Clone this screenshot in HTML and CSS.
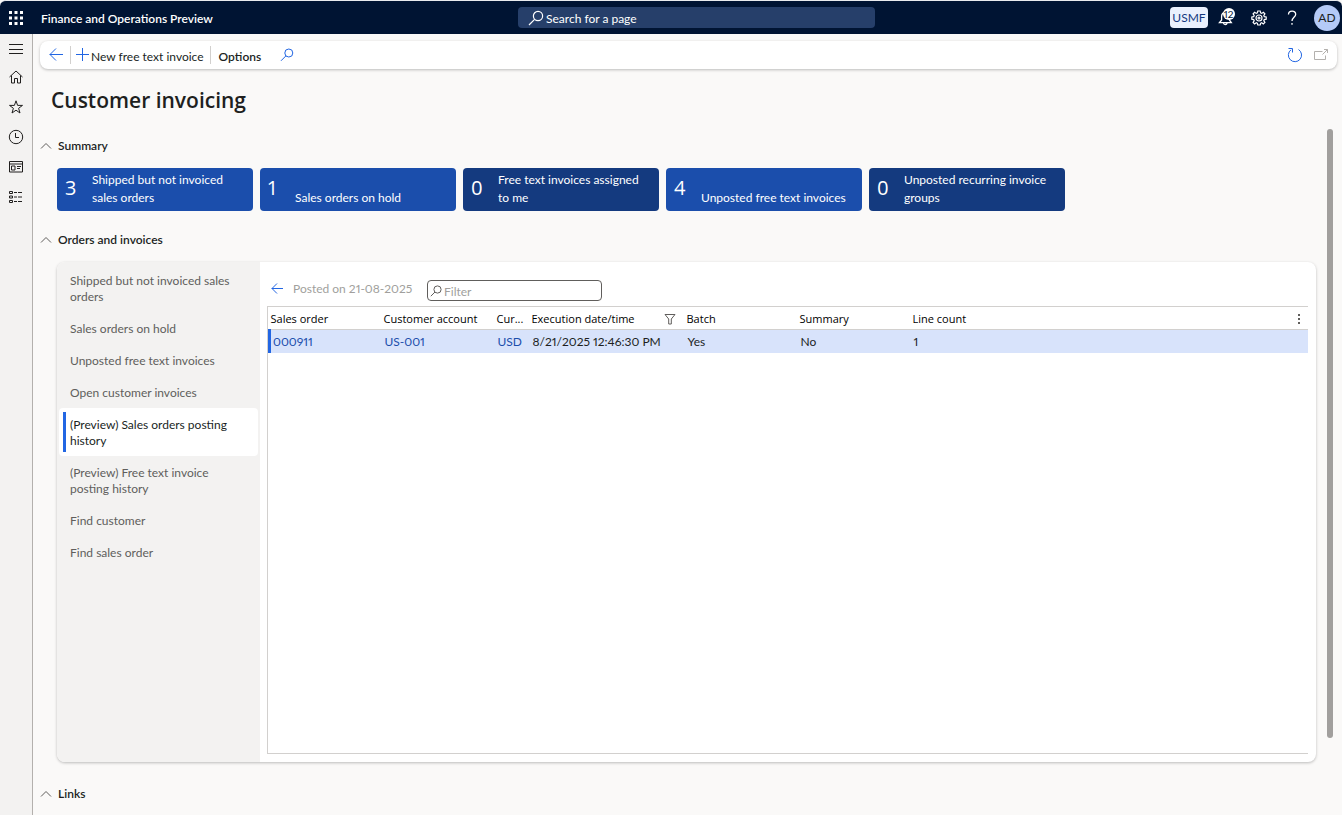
FILE: index.html
```html
<!DOCTYPE html>
<html lang="en">
<head>
<meta charset="utf-8">
<title>Customer invoicing</title>
<link rel="stylesheet" href="styles.css">
</head>
<body>
<header class="topbar">
  <button class="waffle" aria-label="App launcher">
    <svg width="14" height="14" viewBox="0 0 14 14" fill="#fff"><path d="M0 0h3v3H0zM5.500 0h3v3h-3zM11 0h3v3h-3zM0 5.500h3v3H0zM5.500 5.500h3v3h-3zM11 5.500h3v3h-3zM0 11h3v3H0zM5.500 11h3v3h-3zM11 11h3v3h-3z"/></svg>
  </button>
  <span class="product">Finance and Operations Preview</span>
  <label class="page-search">
    <svg width="16" height="16" viewBox="0 0 16 16" fill="none" stroke="#fff" stroke-width="1.200"><circle cx="10" cy="6" r="4.600"/><path d="M6.600 9.400L1 15"/></svg>
    <input type="text" placeholder="Search for a page" aria-label="Search for a page">
  </label>
  <div class="top-actions">
    <button class="company">USMF</button>
    <button class="bar-btn" aria-label="Notifications, 12 new">
      <span class="bell">
        <svg width="16" height="18" viewBox="0 0 16 18" fill="none" stroke="#fff" stroke-width="1.300"><path d="M8 3C4.800 3 3.600 5.300 3.600 7.500V11L1.500 13.600h11.800L11.400 11V9"/><path d="M5.500 14c.3 2 3.200 2 3.600 0"/></svg>
        <span class="badge">12</span>
      </span>
    </button>
    <button class="bar-btn" aria-label="Settings">
      <svg width="16" height="16" viewBox="0 0 16 16" fill="none" stroke="#fff" stroke-width="1.200"><path d="M6.800 1h2.400l.4 1.900 1.100.5 1.700-1.100 1.500 1.600-1.100 1.700.5 1.100 1.900.3v2.200l-1.900.4-.5 1.100 1.100 1.700-1.600 1.500-1.600-1.100-1.100.5L9.200 15H6.800l-.4-1.700-1.100-.5-1.700 1.100-1.500-1.500 1.100-1.700-.5-1.100L.8 9.200V7l1.900-.3.500-1.100-1.100-1.700 1.500-1.600 1.700 1.100 1.100-.5z"/><circle cx="8" cy="8" r="3"/><circle cx="8" cy="8" r="1"/></svg>
    </button>
    <button class="bar-btn" aria-label="Help">
      <svg width="12" height="16" viewBox="0 0 12 16" fill="none" stroke="#fff" stroke-width="1.300"><path d="M2.500 4.500C2.500 0 9.700 0 9.700 4.300c0 2.900-3.700 3.200-3.700 6.700"/><path d="M6 13v1.700"/></svg>
    </button>
    <button class="avatar" aria-label="Account">AD</button>
  </div>
</header>
<div class="shell">
  <nav class="rail" aria-label="Modules">
    <button aria-label="Expand"><svg width="16" height="16" viewBox="0 0 16 16"><path d="M1 4.500h14M1 9.500h14M1 13.500h14"/></svg></button>
    <button aria-label="Home"><svg width="16" height="16" viewBox="0 0 16 16"><path d="M1.500 8L8 2l6.500 6M3.500 6.500v7.500h3V9.500h3V14h3V6.500"/></svg></button>
    <button aria-label="Favorites"><svg width="16" height="16" viewBox="0 0 16 16"><path d="M8 1.800l1.600 4.600h4.900l-3.900 2.900 1.400 4.700L8 11.200 4 14l1.400-4.700-3.900-2.900h4.900z"/></svg></button>
    <button aria-label="Recent"><svg width="16" height="16" viewBox="0 0 16 16"><circle cx="8" cy="8" r="6.700"/><path d="M7.500 4v4.500H11"/></svg></button>
    <button aria-label="Workspaces"><svg width="16" height="16" viewBox="0 0 16 16"><path d="M1.500 2.500h13v10.500h-13zM1.500 5h13M3.500 7h3.500v4H3.500zM9 7.500h4M9 9.500h3"/></svg></button>
    <button aria-label="Modules"><svg width="16" height="16" viewBox="0 0 16 16"><path d="M1.500 2.500h3v2h-3zM1.500 7h3v2h-3zM1.500 11.500h3v2h-3zM6 3.500h3M10 3.500h4M6 8h3M10 8h4M6 12.500h3M10 12.500h4"/></svg></button>
  </nav>
  <main class="page">
    <div class="toolbar">
      <button class="tool back" aria-label="Back"><svg class="blue" width="14" height="14" viewBox="0 0 14 14"><path d="M14 6.500H.8M7 .5l-6 6 6 6"/></svg></button>
      <button class="tool new"><svg class="blue" width="14" height="14" viewBox="0 0 14 14"><path d="M6.500 0v13M0 6.500h13"/></svg><span>New free text invoice</span></button>
      <button class="tool options"><span>Options</span></button>
      <button class="tool" aria-label="Find action"><svg class="blue" width="14" height="14" viewBox="0 0 14 14"><circle cx="8.800" cy="5" r="4"/><path d="M5.900 7.900L1 12.800"/></svg></button>
      <div class="tool-end">
        <button class="tool" aria-label="Refresh"><svg class="blue" width="16" height="16" viewBox="0 0 16 16"><path d="M11.500 2.500A6.600 6.600 0 1 1 4 2.800M1.500 1.500h4v4"/></svg></button>
        <button class="tool" aria-label="Open in new window"><svg class="muted" width="14" height="14" viewBox="0 0 14 14"><path d="M8.500 3.500H.5v8h11V7.500M8.500 6.500l5-5M10 1.500h3.500V5"/></svg></button>
      </div>
    </div>
    <h1>Customer invoicing</h1>
    <div class="scroller">
      <div class="content">
        <section class="summary">
          <h2><button class="section-head"><svg width="12" height="8" viewBox="0 0 12 8"><path d="M1 6.500l5-5 5 5"/></svg>Summary</button></h2>
          <div class="tiles">
            <button class="tile"><b>3</b><span>Shipped but not invoiced sales orders</span></button>
            <button class="tile"><b>1</b><span>Sales orders on hold</span></button>
            <button class="tile dark"><b>0</b><span>Free text invoices assigned to me</span></button>
            <button class="tile"><b>4</b><span>Unposted free text invoices</span></button>
            <button class="tile dark"><b>0</b><span>Unposted recurring invoice groups</span></button>
          </div>
        </section>
        <section class="orders">
          <h2><button class="section-head"><svg width="12" height="8" viewBox="0 0 12 8"><path d="M1 6.500l5-5 5 5"/></svg>Orders and invoices</button></h2>
          <div class="panel">
            <div class="tabs">
              <button>Shipped but not invoiced sales orders</button>
              <button>Sales orders on hold</button>
              <button>Unposted free text invoices</button>
              <button>Open customer invoices</button>
              <button class="active">(Preview) Sales orders posting history</button>
              <button>(Preview) Free text invoice posting history</button>
              <button>Find customer</button>
              <button>Find sales order</button>
            </div>
            <div class="detail">
              <div class="detail-bar">
                <button class="tool" aria-label="Previous day"><svg class="blue" width="12" height="12" viewBox="0 0 12 12"><path d="M12 5.500H.8M6 .5l-5 5 5 5"/></svg></button>
                <span class="posted">Posted on 21-08-2025</span>
                <label class="filter"><svg width="12" height="12" viewBox="0 0 12 12"><circle cx="7.500" cy="4.500" r="3.600"/><path d="M5 7L.8 11.200"/></svg><input type="text" placeholder="Filter" aria-label="Filter"></label>
              </div>
              <div class="grid">
                <table>
                  <colgroup><col class="c-wide"><col class="c-wide"><col class="c-cur"><col class="c-date"><col class="c-wide"><col class="c-wide"><col></colgroup>
                  <thead><tr>
                    <th>Sales order</th><th>Customer account</th><th>Cur...</th>
                    <th><span class="th-filter">Execution date/time<svg width="12" height="12" viewBox="0 0 12 12"><path d="M1 1.500h10L7.300 6v5H4.700V6z"/></svg></span></th>
                    <th>Batch</th><th>Summary</th>
                    <th><span class="th-more">Line count<button aria-label="Grid options"><svg width="4" height="12" viewBox="0 0 4 12"><path d="M1 1h2v2H1zM1 5h2v2H1zM1 9h2v2H1z"/></svg></button></span></th>
                  </tr></thead>
                  <tbody><tr>
                    <td><a href="#">000911</a></td><td><a href="#">US-001</a></td><td><a href="#">USD</a></td><td>8/21/2025 12:46:30 PM</td><td>Yes</td><td>No</td><td>1</td>
                  </tr></tbody>
                </table>
              </div>
            </div>
          </div>
        </section>
        <section class="links">
          <h2><button class="section-head"><svg width="12" height="8" viewBox="0 0 12 8"><path d="M1 6.500l5-5 5 5"/></svg>Links</button></h2>
        </section>
      </div>
      <div class="track"><div class="thumb"></div></div>
    </div>
  </main>
</div>
</body>
</html>
```
FILE: styles.css
```css
* { box-sizing: border-box; }
body {
  margin: 0;
  height: 100vh;
  display: flex;
  flex-direction: column;
  overflow: hidden;
  background: #faf9f8;
  color: #201f1e;
  font: 12px/16px Lato, "Open Sans", sans-serif;
  font-variant-numeric: proportional-nums;
}
button, input {
  font: inherit;
  color: inherit;
  background: none;
  border: 0;
  padding: 0;
  margin: 0;
}
button { cursor: pointer; }
svg { display: block; flex: none; }
h1, h2 { margin: 0; font-size: 12px; font-weight: 600; }

.topbar {
  flex: none;
  display: grid;
  grid-template-columns: 33px 485px minmax(200px, 357px) 1fr;
  align-items: center;
  height: 34px;
  border-top: 1px solid #e9ebee;
  background: #001433;
  color: #fff;
  border-radius: 6px 6px 0 0;
}
.waffle { justify-self: end; padding-right: 10px; }
.product { padding: 2px 0 0 8px; font-weight: 600; }
.page-search {
  display: flex;
  align-items: center;
  gap: 2px;
  height: 21px;
  padding: 0 10px;
  background: #263f6a;
  border-radius: 4px;
}
.page-search input { flex: 1; min-width: 0; padding-top: 2px; outline: 0; }
.page-search input::placeholder { color: #fff; opacity: 1; }
.top-actions { display: flex; justify-content: flex-end; align-items: center; padding-right: 2px; }
.bar-btn { width: 33px; display: grid; place-items: center; }
.company {
  width: 38px;
  height: 21px;
  margin-right: 1px;
  border-radius: 4px;
  background: #eaf0fd;
  color: #14387f;
}
.bell { position: relative; }
.badge {
  position: absolute;
  top: -1px;
  right: -1px;
  width: 12px;
  height: 12px;
  border-radius: 6px;
  background: #fff;
  color: #001433;
  font-size: 10px;
  line-height: 12px;
  text-align: center;
}
.avatar {
  width: 26px;
  height: 26px;
  margin-left: 6px;
  border-radius: 13px;
  background: #b4caf7;
  color: #201f1e;
}

.shell { flex: 1; display: flex; min-height: 0; }
.rail {
  flex: none;
  width: 33px;
  background: #f3f2f1;
  border-right: 1px solid #b3b0ad;
  display: flex;
  flex-direction: column;
}
.rail button { height: 30px; display: grid; place-items: center; }
.rail button:first-child { height: 28px; }
.rail svg { fill: none; stroke: #201f1e; stroke-width: 1; }
.page { flex: 1; min-width: 0; display: flex; flex-direction: column; }

.toolbar {
  flex: none;
  display: flex;
  align-items: center;
  height: 28px;
  margin: 7px 5px 0 7px;
  padding: 0 9px;
  background: #fff;
  border-radius: 8px;
  box-shadow: 0 1px 3px rgba(0, 0, 0, 0.25);
}
.tool { display: flex; align-items: center; height: 18px; }
.tool span { padding-top: 3px; }
.tool svg { fill: none; stroke-width: 1; }
.blue { stroke: #2266e3; }
.muted { stroke: #b3b0ad; }
.back { padding-right: 7px; border-right: 1px solid #d2d0ce; }
.new { gap: 1px; padding: 0 6px 0 5px; border-right: 1px solid #d2d0ce; }
.options { padding: 0 19px 0 8px; font-weight: 600; }
.tool-end { display: flex; gap: 11px; margin-left: auto; }

h1 { padding: 16px 0 0 18px; font-family: "Open Sans", sans-serif; font-size: 21px; line-height: 30px; }

.scroller { flex: 1; min-height: 0; display: flex; padding-top: 14px; }
.content { flex: 1; min-width: 0; display: flex; flex-direction: column; }
.track { width: 26px; padding-left: 11px; }
.thumb { width: 6px; height: calc(100% - 77px); background: #a19f9d; border-radius: 3px; }
.section-head { display: flex; align-items: center; gap: 6px; height: 20px; padding-left: 7px; font-weight: 600; }
.section-head svg { fill: none; stroke: #605e5c; }
.summary { padding-top: 7px; }

.tiles { display: flex; flex-wrap: wrap; gap: 7px; padding: 12px 0 0 24px; }
.tile {
  display: flex;
  width: 196px;
  height: 43px;
  padding: 3px 8px 4px;
  border-radius: 4px;
  background: #1b4eac;
  color: #fff;
  text-align: left;
}
.dark { background: #143a7f; }
.tile b { width: 27px; font-family: "Open Sans", sans-serif; font-size: 20px; line-height: 34px; font-weight: 400; }
.tile span { flex: 1; align-self: flex-end; line-height: 18px; }

.orders { flex: 1; display: flex; flex-direction: column; padding-top: 19px; }
.panel {
  flex: 1;
  display: flex;
  margin: 12px 0 0 24px;
  background: #fff;
  border-radius: 8px;
  box-shadow: 0 1px 3px rgba(0, 0, 0, 0.25);
  overflow: hidden;
}
.tabs {
  flex: none;
  width: 203px;
  padding: 2px;
  background: #f3f2f1;
  color: #605e5c;
  display: flex;
  flex-direction: column;
}
.tabs button { padding: 9px 16px 7px 11px; text-align: left; border-radius: 4px; }
.tabs .active {
  color: #201f1e;
  background: linear-gradient(#2266e3, #2266e3) 4px 4px / 3px calc(100% - 8px) no-repeat, #fff;
}
.detail { flex: 1; min-width: 0; display: flex; flex-direction: column; padding: 18px 8px 8px 7px; }
.detail-bar { display: flex; align-items: flex-start; height: 21px; padding-left: 4px; color: #a19f9d; }
.posted { width: 144px; padding: 1px 0 0 10px; }
.filter {
  display: flex;
  align-items: center;
  gap: 2px;
  width: 175px;
  height: 21px;
  padding: 0 2px;
  border: 1px solid #605e5c;
  border-radius: 4px;
}
.filter svg { fill: none; stroke: #605e5c; }
.filter input { flex: 1; min-width: 0; padding-top: 2px; outline: 0; }
.filter input::placeholder { color: #a19f9d; opacity: 1; }
.grid { flex: 1; margin-top: 5px; border: 1px solid #d2d0ce; border-width: 1px 0 1px 1px; }
table { width: 100%; table-layout: fixed; border-collapse: collapse; }
.c-wide { width: 113px; }
.c-cur { width: 35px; }
.c-date { width: 155px; }
th, td { text-align: left; white-space: nowrap; }
th {
  height: 22px;
  padding: 2px 7px 0 1px;
  border-bottom: 1px solid #d2d0ce;
  color: #000;
  font-family: "Open Sans", sans-serif;
  font-size: 11px;
  font-weight: 400;
}
th:nth-child(3) { padding-right: 0; }
td { height: 24px; padding: 2px 0 0 2px; background: #d8e3fb; }
td:first-child { border-left: 3px solid #2266e3; }
td a { color: #1b4eac; text-decoration: none; }
.th-filter, .th-more { display: flex; justify-content: space-between; align-items: center; }
.th-filter { padding-right: 3px; }
.th-filter svg { fill: none; stroke: #605e5c; }
.th-more svg { fill: #605e5c; }
.links { padding: 22px 0 11px; }
```
